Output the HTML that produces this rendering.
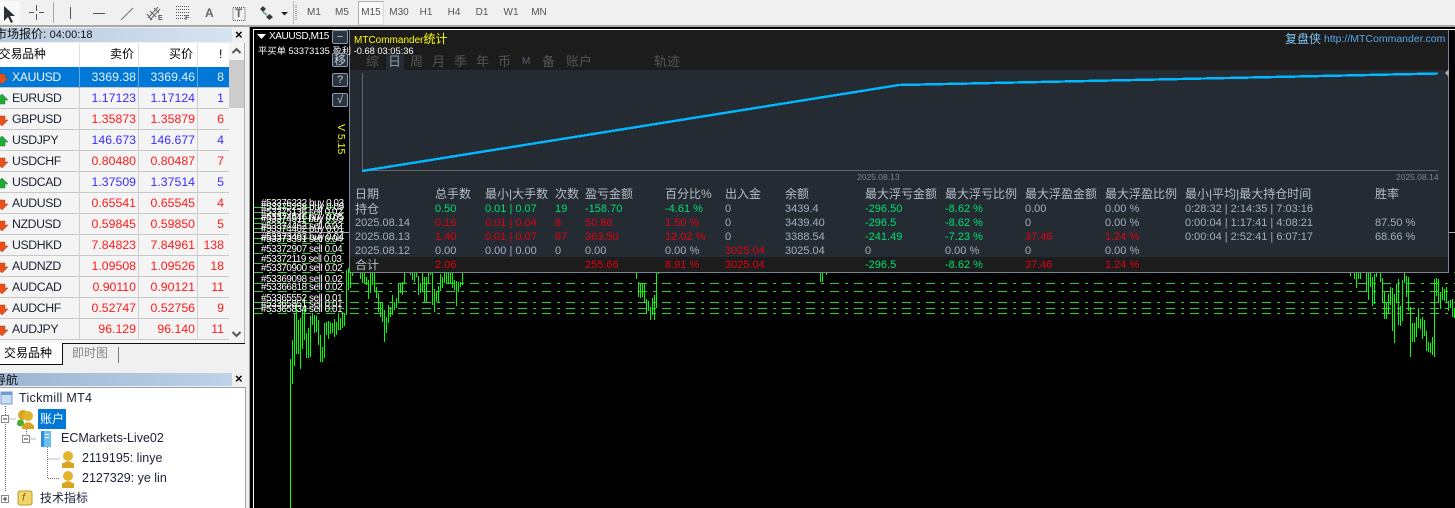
<!DOCTYPE html>
<html><head><meta charset="utf-8"><style>
html,body{margin:0;padding:0;background:#000}
#p{position:relative;width:1455px;height:508px;overflow:hidden;background:#000;font-family:"Liberation Sans","Noto Sans CJK SC",sans-serif;font-size:12px;color:#000}
#p div,#p span,#p svg{position:absolute}
#p span{white-space:nowrap}
#p span span{position:static}
.tf{top:7px;font-size:10px;color:#555;width:30px;text-align:center}
.r{left:0;width:229px;height:20px;background:#f4f4f4;border-bottom:1px solid #c8c8c8;font-size:12.3px;line-height:20px}
.r .s{left:12px;color:#1a2230;letter-spacing:-.4px}
.r .a{right:93px}.r .b{right:34px}.r .c{right:5px}
.r i{position:absolute;top:0;width:1px;height:21px;background:#cfcfcf}
.u{color:#3a2cff}.d{color:#ff1a1a}
.l{left:261px;color:#fff;font-size:9.8px;line-height:10px;letter-spacing:-.37px}
.h,.t{font-size:11px;line-height:14px;color:#a3afc0}
.h{top:187px;font-size:12px;color:#b4bdc9}
.g{color:#00e070}.e{color:#e0000e}
.tb{top:54px;font-size:13px;line-height:15px;color:#555}
.bt{left:332px;width:14px;height:12px;background:#2a3440;border:1px solid #8a9ab0;border-radius:2px;color:#c5ccd6;font-size:11px;line-height:12px;text-align:center}
.n{font-size:12.5px;line-height:16px;color:#1c2233}
</style></head><body><div id="p">

<!-- chart layer -->
<svg style="left:0;top:0" width="1455" height="508" viewBox="0 0 1455 508">
<rect x="253" y="29" width="1202" height="1" fill="#fff"/>
<rect x="253" y="29" width="1" height="479" fill="#fff"/>
<g stroke="#32cd32" stroke-width="1" stroke-dasharray="9 6 3 6" shape-rendering="crispEdges" fill="none">
<path d="M254 207.5H349M254 212.5H349M254 218.5H349M254 223.5H349M254 228.5H349M254 238.5H349M254 243.5H349M254 253.5H349M254 263.5H349"/>
<path d="M254 272.5H1455M254 283.5H1455M254 291.5H1455M254 302.5H1455M254 308.5H1455M254 313.5H1455"/>
</g>
<path d="M254 232.5H349M1449 232.5H1455" stroke="#aaa" shape-rendering="crispEdges"/>
<path shape-rendering="crispEdges" stroke="#00ff00" stroke-width="1" fill="none" d="M290.5 359V508M292.5 340V384M294.5 313V366M296.5 303V354M298.5 320V354M300.5 318V369M302.5 310V349M304.5 297V340M306.5 333V358M308.5 328V358M310.5 316V357M312.5 313V325M314.5 315V333M316.5 316V332M318.5 320V345M320.5 335V362M322.5 347V362M324.5 323V358M326.5 322V335M328.5 321V339M330.5 322V334M332.5 323V333M334.5 319V337M336.5 322V335M338.5 313V330M340.5 318V330M342.5 312V328M344.5 313V326M346.5 270V315M348.5 268V290M350.5 272V288M352.5 272V276M360.5 272V279M362.5 272V283M364.5 272V284M366.5 277V285M368.5 280V299M370.5 272V293M372.5 272V285M374.5 272V292M376.5 287V298M378.5 293V312M380.5 302V317M382.5 302V322M384.5 310V342M386.5 317V333M388.5 305V323M390.5 307V317M392.5 295V315M394.5 302V310M396.5 298V308M398.5 283V302M400.5 283V293M402.5 282V295M404.5 272V284M410.5 272V275M412.5 272V280M414.5 272V282M416.5 272V277M418.5 276V295M420.5 283V293M422.5 272V292M424.5 277V302M426.5 277V302M428.5 272V283M430.5 272V275M432.5 272V305M434.5 289V312M436.5 291V302M438.5 286V302M440.5 274V291M442.5 277V288M444.5 273V283M446.5 272V284M448.5 272V284M450.5 272V284M452.5 273V288M454.5 280V290M456.5 281V306M458.5 282V292M460.5 282V287M462.5 272V285M636.5 272V279M638.5 282V297M640.5 283V298M642.5 283V297M644.5 283V302M646.5 299V313M648.5 301V311M650.5 307V320M652.5 298V315M654.5 295V320M656.5 272V308M658.5 272V274M820.5 272V282M822.5 272V282M826.5 272V275M1350.5 272V276M1354.5 272V279M1356.5 272V288M1358.5 272V279M1360.5 272V279M1366.5 272V292M1368.5 272V300M1370.5 272V287M1372.5 277V306M1374.5 274V304M1376.5 272V277M1380.5 272V282M1382.5 278V303M1384.5 292V319M1386.5 302V319M1388.5 294V313M1390.5 287V305M1392.5 288V331M1394.5 294V343M1396.5 284V303M1398.5 279V325M1400.5 306V326M1402.5 280V321M1404.5 272V283M1406.5 276V297M1408.5 277V311M1410.5 307V357M1412.5 323V342M1414.5 323V342M1416.5 317V337M1418.5 308V328M1420.5 319V329M1422.5 317V339M1424.5 320V336M1426.5 331V351M1428.5 342V352M1430.5 343V353M1432.5 337V355M1434.5 279V357M1436.5 278V296M1438.5 279V302M1440.5 292V309M1442.5 287V300M1444.5 289V301M1446.5 287V302M1448.5 301V311M1450.5 300V308M1452.5 299V317M1454.5 308V318"/>
</svg>

<!-- order labels -->
<span class="l" style="top:199px">#53376232 buy 0.03</span>
<span class="l" style="top:203px">#53375258 buy 0.09</span>
<span class="l" style="top:208px">#53375136 sell 0.02</span>
<span class="l" style="top:213px">#53374546 buy 0.05</span>
<span class="l" style="top:215px">#53374511 buy 0.03</span>
<span class="l" style="top:222px">#53374462 sell 0.02</span>
<span class="l" style="top:225px">#53374402 buy 0.01</span>
<span class="l" style="top:233px">#53373493 buy 0.04</span>
<span class="l" style="top:235px">#53373391 sell 0.04</span>
<span class="l" style="top:245px">#53372907 sell 0.04</span>
<span class="l" style="top:255px">#53372119 sell 0.03</span>
<span class="l" style="top:264px">#53370900 sell 0.02</span>
<span class="l" style="top:275px">#53369098 sell 0.02</span>
<span class="l" style="top:283px">#53366818 sell 0.02</span>
<span class="l" style="top:294px">#53365552 sell 0.01</span>
<span class="l" style="top:300px">#53365851 sell 0.01</span>
<span class="l" style="top:305px">#53365834 sell 0.01</span>

<!-- stats panel -->
<div style="left:349px;top:30px;width:1100px;height:243px;background:#242b33;border-left:1px solid #7a8494;border-right:1px solid #7a8494;border-bottom:1px solid #7a8494;box-sizing:border-box"></div>
<div style="left:350px;top:30px;width:1098px;height:40px;background:#1c1c1c"></div>
<div style="left:350px;top:257px;width:1098px;height:15px;background:#1c1c1c"></div>
<div style="left:386px;top:53px;width:18px;height:17px;background:#262c33;border-radius:2px"></div>

<span style="left:354px;top:32px;font-size:10px;line-height:14px;color:#ffff00">MTCommander<span style="font-size:12px">统计</span></span>
<span style="left:1285px;top:32px;font-size:12px;line-height:15px;color:#7fc4f5">复盘侠</span>
<span style="left:1324px;top:32px;font-size:10.5px;line-height:15px;color:#5aa7e8">http://MTCommander.com</span>

<span class="tb" style="left:366px">综</span><span class="tb" style="left:388px;color:#8a97a6">日</span><span class="tb" style="left:410px">周</span><span class="tb" style="left:432px">月</span><span class="tb" style="left:454px">季</span><span class="tb" style="left:476px">年</span><span class="tb" style="left:498px">币</span><span class="tb" style="left:522px;font-size:10px;color:#5a6470">M</span><span class="tb" style="left:542px">备</span><span class="tb" style="left:566px">账户</span><span class="tb" style="left:654px">轨迹</span>

<svg style="left:350px;top:70px" width="1098" height="112" viewBox="350 70 1098 112">
<path d="M362.5 73V170.5H1438" stroke="#62666c" fill="none" shape-rendering="crispEdges"/>
<path d="M362 171L899 85L1438 73.5" stroke="#00b8ff" stroke-width="2.4" fill="none" shape-rendering="crispEdges"/>
</svg>
<svg style="left:1445px;top:68px" width="4" height="10"><path d="M4 1V9L0 5Z" fill="#aaa"/></svg>
<span style="left:857px;top:172px;font-size:8.5px;line-height:11px;color:#7a8590">2025.08.13</span>
<span style="left:1396px;top:172px;font-size:8.5px;line-height:11px;color:#7a8590">2025.08.14</span>

<span class="h" style="left:355px">日期</span><span class="h" style="left:435px">总手数</span><span class="h" style="left:485px">最小|大手数</span><span class="h" style="left:555px">次数</span><span class="h" style="left:585px">盈亏金额</span><span class="h" style="left:665px">百分比%</span><span class="h" style="left:725px">出入金</span><span class="h" style="left:785px">余额</span><span class="h" style="left:865px">最大浮亏金额</span><span class="h" style="left:945px">最大浮亏比例</span><span class="h" style="left:1025px">最大浮盈金额</span><span class="h" style="left:1105px">最大浮盈比例</span><span class="h" style="left:1185px">最小|平均|最大持仓时间</span><span class="h" style="left:1375px">胜率</span>

<span class="t" style="left:355px;top:202px;font-size:12px;color:#b4bdc9">持仓</span><span class="t g" style="left:435px;top:202px">0.50</span><span class="t g" style="left:485px;top:202px">0.01 | 0.07</span><span class="t g" style="left:555px;top:202px">19</span><span class="t g" style="left:585px;top:202px">-158.70</span><span class="t g" style="left:665px;top:202px">-4.61 %</span><span class="t" style="left:725px;top:202px">0</span><span class="t" style="left:785px;top:202px">3439.4</span><span class="t g" style="left:865px;top:202px">-296.50</span><span class="t g" style="left:945px;top:202px">-8.62 %</span><span class="t" style="left:1025px;top:202px">0.00</span><span class="t" style="left:1105px;top:202px">0.00 %</span><span class="t" style="left:1185px;top:202px">0:28:32 | 2:14:35 | 7:03:16</span>

<span class="t" style="left:355px;top:216px">2025.08.14</span><span class="t e" style="left:435px;top:216px">0.16</span><span class="t e" style="left:485px;top:216px">0.01 | 0.04</span><span class="t e" style="left:555px;top:216px">8</span><span class="t e" style="left:585px;top:216px">50.86</span><span class="t e" style="left:665px;top:216px">1.50 %</span><span class="t" style="left:725px;top:216px">0</span><span class="t" style="left:785px;top:216px">3439.40</span><span class="t g" style="left:865px;top:216px">-296.5</span><span class="t g" style="left:945px;top:216px">-8.62 %</span><span class="t" style="left:1025px;top:216px">0</span><span class="t" style="left:1105px;top:216px">0.00 %</span><span class="t" style="left:1185px;top:216px">0:00:04 | 1:17:41 | 4:08:21</span><span class="t" style="left:1375px;top:216px">87.50 %</span>

<span class="t" style="left:355px;top:230px">2025.08.13</span><span class="t e" style="left:435px;top:230px">1.40</span><span class="t e" style="left:485px;top:230px">0.01 | 0.07</span><span class="t e" style="left:555px;top:230px">67</span><span class="t e" style="left:585px;top:230px">363.50</span><span class="t e" style="left:665px;top:230px">12.02 %</span><span class="t" style="left:725px;top:230px">0</span><span class="t" style="left:785px;top:230px">3388.54</span><span class="t g" style="left:865px;top:230px">-241.49</span><span class="t g" style="left:945px;top:230px">-7.23 %</span><span class="t e" style="left:1025px;top:230px">37.46</span><span class="t e" style="left:1105px;top:230px">1.24 %</span><span class="t" style="left:1185px;top:230px">0:00:04 | 2:52:41 | 6:07:17</span><span class="t" style="left:1375px;top:230px">68.66 %</span>

<span class="t" style="left:355px;top:244px">2025.08.12</span><span class="t" style="left:435px;top:244px">0.00</span><span class="t" style="left:485px;top:244px">0.00 | 0.00</span><span class="t" style="left:555px;top:244px">0</span><span class="t" style="left:585px;top:244px">0.00</span><span class="t" style="left:665px;top:244px">0.00 %</span><span class="t e" style="left:725px;top:244px">3025.04</span><span class="t" style="left:785px;top:244px">3025.04</span><span class="t" style="left:865px;top:244px">0</span><span class="t" style="left:945px;top:244px">0.00 %</span><span class="t" style="left:1025px;top:244px">0</span><span class="t" style="left:1105px;top:244px">0.00 %</span>

<span class="t" style="left:355px;top:258px;font-size:12px;color:#b4bdc9">合计</span><span class="t e" style="left:435px;top:258px">2.06</span><span class="t e" style="left:585px;top:258px">255.66</span><span class="t e" style="left:665px;top:258px">8.91 %</span><span class="t e" style="left:725px;top:258px">3025.04</span><span class="t g" style="left:865px;top:258px">-296.5</span><span class="t g" style="left:945px;top:258px">-8.62 %</span><span class="t e" style="left:1025px;top:258px">37.46</span><span class="t e" style="left:1105px;top:258px">1.24 %</span>

<!-- chart caption -->
<svg style="left:257px;top:34px" width="9" height="6"><path d="M0 0H9L4.5 5Z" fill="#fff"/></svg>
<span style="left:269px;top:30px;color:#fff;font-size:10px;line-height:13px;letter-spacing:-.4px">XAUUSD,M15</span>
<span style="left:258px;top:45px;color:#fff;font-size:9.3px;line-height:12px">平买单 53373135 盈利 -0.68 03:05:36</span>
<div class="bt" style="top:30px">−</div><div class="bt" style="top:53px;font-size:12px">移</div><div class="bt" style="top:73px">?</div><div class="bt" style="top:93px">√</div>
<span style="left:335px;top:124px;color:#ffff00;font-size:10.5px;line-height:12px;writing-mode:vertical-rl">V 5.15</span>

<!-- toolbar -->
<div style="left:0;top:0;width:1455px;height:25px;background:#f0f0f0;border-bottom:2px solid #a8a8a8"></div>
<div style="left:0;top:1px;width:20px;height:23px;background:#f8f8f8"></div>
<div style="left:358px;top:1px;width:24px;height:22px;background:#f8f8f8;border:1px solid #b0b0b0;border-bottom-color:#ddd;border-right-color:#ddd"></div>
<svg style="left:0;top:0" width="300" height="25" viewBox="0 0 300 25">
<path d="M4 6V21L8 17L11 23L13 22L10 16H15Z" fill="#2a2f33"/>
<g fill="none" stroke="#555" stroke-width="1" shape-rendering="crispEdges">
<path d="M36.5 5V11M36.5 14V20M29 12.5H34M39 12.5H44"/>
<path d="M53.5 2V23" stroke="#aaa"/>
<path d="M70.5 7V19"/>
<path d="M93 13.5H105"/>
<path d="M293.5 1V24" stroke="#bbb"/>
<path d="M176 6.500H189M176 9.500H189M176 12.500H189M176 15.500H185M176 18.500H185" stroke-dasharray="1 1"/>
<path d="M233 7.500H245V20.500H233Z" stroke-dasharray="1 1"/>
<path d="M296 5V21" stroke="#aaa" stroke-width="2" stroke-dasharray="1 1"/>
</g>
<path d="M121 20L133 8" stroke="#777" fill="none"/>
<path d="M148 18L158 7M150 20L160 9M147 14L152 20M150 11L156 17M154 8L159 13" stroke="#666" fill="none"/>
<path d="M260 9l3-3 3 3-3 3zM266 17l3.500-3 3.500 3-3.500 3z" fill="#3a3a3a"/>
<path d="M263 12l4 3" stroke="#4a8" stroke-width="1.500" fill="none"/>
<path d="M281 12H288L284.500 15.500Z" fill="#222"/>
</svg>
<span style="left:158px;top:15px;font-size:7px;font-weight:bold;color:#555">E</span>
<span style="left:185px;top:15px;font-size:7px;font-weight:bold;color:#555">F</span>
<span style="left:205px;top:6px;font-size:12px;font-weight:bold;color:#666">A</span>
<span style="left:235px;top:6px;font-size:12px;font-weight:bold;color:#666">T</span>
<span class="tf" style="left:299px">M1</span><span class="tf" style="left:327px">M5</span><span class="tf" style="left:356px">M15</span><span class="tf" style="left:384px">M30</span><span class="tf" style="left:411px">H1</span><span class="tf" style="left:439px">H4</span><span class="tf" style="left:467px">D1</span><span class="tf" style="left:496px">W1</span><span class="tf" style="left:524px">MN</span>

<!-- left column -->
<div style="left:0;top:27px;width:250px;height:481px;background:#f0f0f0;border-right:1px solid #a0a0a0;box-sizing:border-box"></div>
<div style="left:0;top:28px;width:232px;height:14px;background:linear-gradient(90deg,#b8cade,#d6e3f1)"></div>
<span style="left:-5px;top:27px;font-size:12px;line-height:15px;color:#111">市场报价: <span style="font-size:11px">04:00:18</span></span>
<span style="left:235px;top:27px;font-size:13px;line-height:15px;font-weight:bold">×</span>
<div style="left:0;top:43px;width:245px;height:300px;background:#f4f4f4;border-right:1px solid #b0b0b0;box-sizing:border-box"></div>
<div style="left:0;top:43px;width:229px;height:24px;background:#fff"></div>
<div style="left:79px;top:43px;width:1px;height:24px;background:#e0e0e0"></div><div style="left:138px;top:43px;width:1px;height:24px;background:#e0e0e0"></div><div style="left:197px;top:43px;width:1px;height:24px;background:#e0e0e0"></div>
<span style="left:-1px;top:46px;font-size:11.7px;line-height:17px">交易品种</span><span style="left:110px;top:46px;font-size:12px;line-height:17px">卖价</span><span style="left:169px;top:46px;font-size:12px;line-height:17px">买价</span><span style="left:219px;top:46px;font-size:12px;line-height:17px">!</span>

<div class="r" style="top:67px;background:#0078d7"><span class="s" style="color:#f0f6fc">XAUUSD</span><span class="a" style="color:#e8f0f8">3369.38</span><span class="b" style="color:#e8f0f8">3369.46</span><span class="c" style="color:#e8f0f8">8</span><i style="left:79px;background:#6aa8de"></i><i style="left:138px;background:#6aa8de"></i><i style="left:197px;background:#6aa8de"></i></div>
<div class="r" style="top:88px"><span class="s">EURUSD</span><span class="a u">1.17123</span><span class="b u">1.17124</span><span class="c u">1</span><i style="left:79px"></i><i style="left:138px"></i><i style="left:197px"></i></div>
<div class="r" style="top:109px"><span class="s">GBPUSD</span><span class="a d">1.35873</span><span class="b d">1.35879</span><span class="c d">6</span><i style="left:79px"></i><i style="left:138px"></i><i style="left:197px"></i></div>
<div class="r" style="top:130px"><span class="s">USDJPY</span><span class="a u">146.673</span><span class="b u">146.677</span><span class="c u">4</span><i style="left:79px"></i><i style="left:138px"></i><i style="left:197px"></i></div>
<div class="r" style="top:151px"><span class="s">USDCHF</span><span class="a d">0.80480</span><span class="b d">0.80487</span><span class="c d">7</span><i style="left:79px"></i><i style="left:138px"></i><i style="left:197px"></i></div>
<div class="r" style="top:172px"><span class="s">USDCAD</span><span class="a u">1.37509</span><span class="b u">1.37514</span><span class="c u">5</span><i style="left:79px"></i><i style="left:138px"></i><i style="left:197px"></i></div>
<div class="r" style="top:193px"><span class="s">AUDUSD</span><span class="a d">0.65541</span><span class="b d">0.65545</span><span class="c d">4</span><i style="left:79px"></i><i style="left:138px"></i><i style="left:197px"></i></div>
<div class="r" style="top:214px"><span class="s">NZDUSD</span><span class="a d">0.59845</span><span class="b d">0.59850</span><span class="c d">5</span><i style="left:79px"></i><i style="left:138px"></i><i style="left:197px"></i></div>
<div class="r" style="top:235px"><span class="s">USDHKD</span><span class="a d">7.84823</span><span class="b d">7.84961</span><span class="c d">138</span><i style="left:79px"></i><i style="left:138px"></i><i style="left:197px"></i></div>
<div class="r" style="top:256px"><span class="s">AUDNZD</span><span class="a d">1.09508</span><span class="b d">1.09526</span><span class="c d">18</span><i style="left:79px"></i><i style="left:138px"></i><i style="left:197px"></i></div>
<div class="r" style="top:277px"><span class="s">AUDCAD</span><span class="a d">0.90110</span><span class="b d">0.90121</span><span class="c d">11</span><i style="left:79px"></i><i style="left:138px"></i><i style="left:197px"></i></div>
<div class="r" style="top:298px"><span class="s">AUDCHF</span><span class="a d">0.52747</span><span class="b d">0.52756</span><span class="c d">9</span><i style="left:79px"></i><i style="left:138px"></i><i style="left:197px"></i></div>
<div class="r" style="top:319px"><span class="s">AUDJPY</span><span class="a d">96.129</span><span class="b d">96.140</span><span class="c d">11</span><i style="left:79px"></i><i style="left:138px"></i><i style="left:197px"></i></div>

<svg style="left:0;top:67px" width="9" height="273" viewBox="0 0 9 273">
<g fill="#e8501c" stroke="#b83a10" stroke-width=".5">
<path d="M-1 7H5V11H8L2 17L-4 11H-1Z"/><path transform="translate(0,42)" d="M-1 7H5V11H8L2 17L-4 11H-1Z"/><path transform="translate(0,84)" d="M-1 7H5V11H8L2 17L-4 11H-1Z"/><path transform="translate(0,126)" d="M-1 7H5V11H8L2 17L-4 11H-1Z"/><path transform="translate(0,147)" d="M-1 7H5V11H8L2 17L-4 11H-1Z"/><path transform="translate(0,168)" d="M-1 7H5V11H8L2 17L-4 11H-1Z"/><path transform="translate(0,189)" d="M-1 7H5V11H8L2 17L-4 11H-1Z"/><path transform="translate(0,210)" d="M-1 7H5V11H8L2 17L-4 11H-1Z"/><path transform="translate(0,231)" d="M-1 7H5V11H8L2 17L-4 11H-1Z"/><path transform="translate(0,252)" d="M-1 7H5V11H8L2 17L-4 11H-1Z"/>
</g>
<g fill="#22a838" stroke="#14802a" stroke-width=".5">
<path d="M2 27L8 33H5V37H-1V33H-4Z"/><path transform="translate(0,42)" d="M2 27L8 33H5V37H-1V33H-4Z"/><path transform="translate(0,84)" d="M2 27L8 33H5V37H-1V33H-4Z"/>
</g>
</svg>

<!-- scrollbar -->
<div style="left:229px;top:60px;width:15px;height:48px;background:#cdcdcd"></div>
<svg style="left:229px;top:43px" width="15" height="297" viewBox="0 0 15 297"><path d="M3.500 10L7.500 6L11.500 10M3.500 289L7.500 293L11.500 289" stroke="#555" stroke-width="2" fill="none"/></svg>

<!-- tabs -->
<div style="left:62px;top:343px;width:183px;height:1px;background:#111"></div>
<div style="left:0;top:343px;width:62px;height:21px;background:#fff;border-right:1px solid #111;border-bottom:1px solid #111"></div>
<span style="left:4px;top:346px;font-size:12px;line-height:15px">交易品种</span>
<span style="left:72px;top:346px;font-size:12px;line-height:15px;color:#888">即时图</span>
<div style="left:118px;top:347px;width:1px;height:16px;background:#777"></div>

<!-- navigator -->
<div style="left:0;top:373px;width:232px;height:13px;background:linear-gradient(90deg,#9db5d2,#bed2e9)"></div>
<span style="left:-6px;top:373px;font-size:12px;line-height:15px;color:#111">导航</span>
<span style="left:235px;top:371px;font-size:13px;line-height:15px;font-weight:bold">×</span>
<div style="left:0;top:387px;width:246px;height:121px;background:#fff;border-top:1px solid #a0a0a0;border-right:1px solid #a0a0a0;box-sizing:border-box"></div>

<svg style="left:0;top:388px" width="120" height="120" viewBox="0 388 120 120">
<path d="M5.500 406V492M5.500 419H16M26.500 429V436M26.500 439H36M47.500 447V478.500H60M47.500 459H60" stroke="#777" stroke-dasharray="1 1" fill="none" shape-rendering="crispEdges"/>
<rect x="1" y="392" width="11" height="12" fill="#c8dcf2" stroke="#6d9bd2"/><rect x="1" y="392" width="11" height="3" fill="#6d9bd2"/>
<rect x="1.500" y="415.500" width="7" height="7" fill="#fff" stroke="#888"/><path d="M3 419H7" stroke="#334"/>
<rect x="22.500" y="435.500" width="7" height="7" fill="#fff" stroke="#888"/><path d="M24 439H28" stroke="#334"/>
<rect x="1.500" y="495.500" width="7" height="7" fill="#fff" stroke="#888"/><path d="M3 499H7M5 497V501" stroke="#334"/>
<rect x="41" y="431" width="10" height="16" fill="#2f8fdc"/><rect x="44" y="431" width="7" height="16" fill="#6cc0f0"/><rect x="45" y="434" width="4" height="1" fill="#fff"/><rect x="45" y="437" width="4" height="1" fill="#fff"/>
<rect x="18" y="491" width="14" height="14" rx="2" fill="#f2d56a" stroke="#b99a2c"/>
<circle cx="23" cy="415" r="5" fill="#d9a520"/><path d="M17 424H25V426H22V425H17Z" fill="#46b02e"/><circle cx="20.500" cy="423" r="3.500" fill="#46b02e"/>
<circle cx="28" cy="416" r="5" fill="#e2b42c"/><path d="M22 429C22 420 34 420 34 429Z" fill="#d9a520"/><path d="M22 425H34V429H22Z" fill="#d9a520"/>
<circle cx="68" cy="456" r="5" fill="#e2b42c"/><path d="M62 468C62 459 74 459 74 468Z" fill="#d9a520"/><path d="M62 463H74V468H62Z" fill="#d9a520"/>
<circle cx="68" cy="476" r="5" fill="#e2b42c"/><path d="M62 488C62 479 74 479 74 488Z" fill="#d9a520"/><path d="M62 483H74V488H62Z" fill="#d9a520"/>
</svg>
<span style="left:22px;top:491px;font-size:11px;line-height:14px;font-style:italic;color:#8a6a10">f</span>
<div style="left:38px;top:409px;width:28px;height:20px;background:#0078d7"></div>
<span class="n" style="left:19px;top:390px;letter-spacing:.3px">Tickmill MT4</span>
<span class="n" style="left:40px;top:411px;color:#fff;font-size:12px">账户</span>
<span class="n" style="left:61px;top:430px">ECMarkets-Live02</span>
<span class="n" style="left:82px;top:450px">2119195: linye</span>
<span class="n" style="left:82px;top:470px">2127329: ye lin</span>
<span class="n" style="left:40px;top:490px;font-size:12px">技术指标</span>
</div></body></html>
